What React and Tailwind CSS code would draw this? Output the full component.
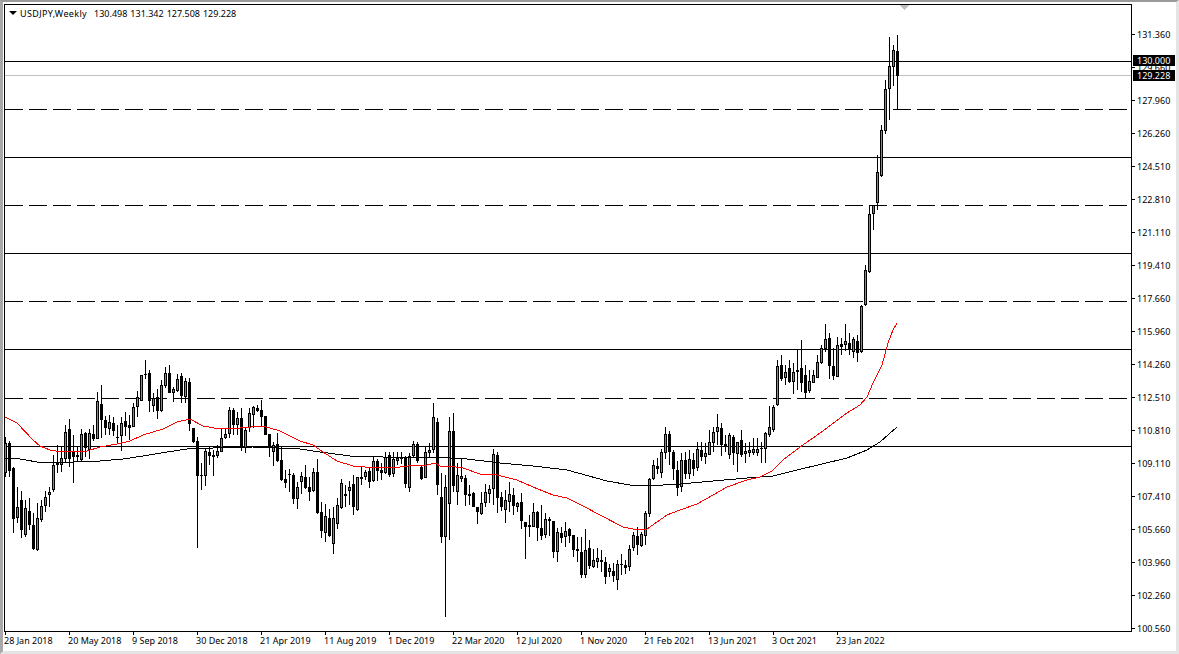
import React from "react";

// candles traced from the chart: [bull, high, top, bottom, low], y values are 3x from the offset
const raw = [
  [360, [
    [1,232,250,338,350],[0,243,250,332,350],[0,322,325,476,518],[1,380,442,474,488],[0,393,420,510,535],
    [1,420,445,525,530],[0,415,453,495,510],[0,460,495,566,570],[1,430,474,570,572],[1,420,438,480,485],
    [1,392,411,438,455],[1,380,396,404,440],[1,285,315,390,395],[0,255,310,314,338],[1,262,295,314,335],
    [1,195,217,298,305],[0,178,207,298,320],[0,225,276,292,368],[0,262,286,291,305],[1,208,223,300,302],
    [0,215,219,265,290],[1,208,220,270,296],[0,195,222,236,243],[1,97,124,236,238],[0,75,132,180,235],
    [0,168,180,203,225],[1,165,186,207,225],[0,170,188,213,228],[0,195,231,233,250],[1,170,189,227,272],
    [0,155,183,200,228],[0,165,195,204,240],[1,128,141,200,200],[1,92,112,142,170],[1,45,46,122,122],
    [0,0,42,46,57],[0,30,39,122,155],[1,100,115,137,157],[0,88,110,153,178],[1,60,76,152,155],
    [1,20,40,77,85],[0,16,40,98,100],[1,80,87,100,125],[1,42,58,92,95],[0,38,48,108,130],
    [1,55,63,110,130],[0,55,67,192,212],[0,205,205,247,250],[0,232,244,347,563],[0,310,346,349,390],
    [1,265,272,347,378],[0,262,276,288,315],[0,270,285,290,347],[1,255,273,288,295],[1,205,235,275,277],
    [1,205,222,234,236],[1,140,150,223,235],[0,145,150,195,225],[1,155,175,195,225],[0,145,174,265,272],
    [1,205,210,265,278],[1,145,160,203,215],[1,138,142,165,205],[0,135,145,152,155],[0,120,150,170,200],
    [0,168,168,225,225],[0,222,222,265,292],[1,245,256,275,318],[0,220,253,303,305],[0,262,300,360,362],
    [0,330,358,368,385],[0,328,342,346,395],[0,338,346,416,432],[1,365,382,416,446],
  ]],
  [390, [
    [1,247,258,275,312],[0,225,262,295,297],[0,262,291,305,332],[1,235,246,303,305],[0,207,246,370,372],
    [0,336,366,422,445],[1,342,379,428,456],[0,358,384,438,442],[1,352,385,461,491],[1,325,345,401,418],
    [1,267,280,353,356],[0,285,313,317,352],[1,272,292,302,345],[0,255,283,350,375],[1,260,262,361,362],
    [0,228,262,266,285],[1,240,246,262,270],[0,232,243,276,294],[1,202,213,272,276],[0,208,213,242,272],
    [0,218,240,248,270],[1,185,200,248,252],[0,185,195,255,260],[1,187,207,253,260],[1,187,203,212,225],
    [0,187,203,206,222],[0,197,200,282,295],[1,190,199,293,305],[1,152,163,198,200],[0,155,162,212,218],
    [0,225,230,267,270],[1,172,187,263,265],[1,160,181,189,200],[1,40,82,179,190],[0,85,97,285,315],
    [0,250,321,440,458],[1,255,292,440,680],[1,82,124,341,450],[0,70,124,288,305],[1,220,256,305,345],
    [1,205,259,266,275],[0,255,265,315,347],[0,285,313,317,345],[0,305,310,351,352],[0,350,352,365,402],
    [1,305,340,372,374],[1,282,307,338,352],[1,285,298,311,340],[1,178,192,298,345],[0,185,196,323,368],
    [0,305,321,351,362],[1,300,331,359,398],[1,275,313,335,365],[0,295,316,347,375],[1,335,340,350,365],
    [0,310,337,394,418],[0,395,396,410,506],[0,375,406,410,440],[1,340,367,410,412],[0,362,366,414,452],
    [0,345,414,438,450],[1,370,388,434,445],[0,380,388,392,437],[0,392,393,485,505],[1,415,427,485,515],
    [0,410,430,444,460],[1,395,424,442,470],[0,415,418,437,458],[0,435,436,480,502],[0,440,478,482,515],
    [0,440,487,555,563],[1,418,481,556,563],[0,450,474,527,537],[1,478,511,530,535],[1,473,505,515,535],
  ]],
  [400, [
    [0,450,481,485,515],[0,472,487,530,552],[1,492,505,515,532],[0,490,514,527,545],[1,480,493,540,570],
    [0,462,491,494,525],[0,480,496,503,522],[1,435,448,500,512],[1,395,406,443,452],[0,380,408,434,465],
    [1,395,403,437,440],[1,332,340,407,435],[1,235,238,342,350],[1,180,196,237,240],[0,175,198,206,222],
    [1,148,157,218,235],[1,82,103,158,178],[0,92,103,157,195],[0,150,156,208,240],[0,182,209,263,287],
    [1,160,180,261,275],[0,155,181,222,238],[1,150,177,222,238],[0,158,180,207,228],[1,125,148,203,212],
    [0,125,151,172,182],[1,130,160,170,192],[1,90,127,164,165],[1,80,97,128,156],[1,42,82,97,135],
    [0,70,85,135,168],[0,105,132,138,155],[1,100,105,165,178],[0,105,110,160,195],[1,125,127,161,215],
    [0,90,121,164,170],[1,130,154,162,190],[1,125,151,158,172],[1,115,148,158,165],[1,115,146,158,168],
    [0,127,143,146,190],[1,95,100,146,190],[1,18,82,104,110],
  ]],
  [290, [
    [1,345,351,420,425],[1,210,228,345,347],[0,195,225,268,272],[1,225,246,265,285],[0,210,234,275,280],
    [1,218,247,277,312],[0,180,240,245,300],[0,150,235,278,305],[0,225,255,308,325],[1,240,273,304,308],
    [1,240,256,278,280],[1,195,217,263,265],[1,165,175,220,222],[1,102,148,177,185],[0,128,145,228,268],
    [0,175,229,258,270],[1,140,166,260,262],[0,145,163,170,195],[1,102,154,166,182],[0,128,160,178,195],
    [1,140,148,185,205],[0,135,154,190,215],[1,45,48,187,190],
  ]],
  [30, [
    [1,705,720,825,828],[1,525,552,725,728],[1,525,525,552,600],[1,375,425,519,540],[1,285,300,438,440],
    [1,150,178,302,312],[1,22,108,178,270],[1,45,60,110,168],[0,15,63,137,238],
  ]],
];

const candles = raw.flatMap(([base, rows]) =>
  rows.map(([up, h, t, b, l]) => ({
    up,
    high: Math.round(base + h / 3),
    top: Math.round(base + t / 3),
    bottom: Math.round(base + b / 3),
    low: Math.round(base + l / 3),
  }))
);

const red =
  "5,417 17,423 33,440 40,446 50,450 62,452 73,451 87,451 100,447 117,444 130,441 143,435 163,429 177,422 190,419 203,426 220,429 240,428 263,426 280,431 300,441 313,445 323,452 337,461 353,466 377,468 400,467 417,465 423,466 435,463 442,467 448,466 463,468 480,474 497,475 517,480 533,487 553,495 567,498 583,506 600,515 623,527 633,529 647,529 667,515 680,510 697,504 713,495 727,487 747,480 760,477 772,471 783,460 800,447 813,438 827,428 847,413 860,405 867,397 873,383 882,365 888,343 893,330 897,323";
const black =
  "5,458 20,459 43,463 73,462 100,461 123,459 143,456 167,452 187,449 213,448 253,447 300,449 320,452 350,456 383,457 433,457 467,459 500,463 533,466 567,470 607,481 630,485 647,486 680,484 713,481 747,478 773,476 797,470 847,458 867,450 880,442 897,427";

const levels = [
  [61, false],
  [109, true],
  [157, false],
  [205, true],
  [253, false],
  [301, true],
  [349, false],
  [398, true],
  [446, false],
];

const prices = [
  "131.360", "129.660", "127.960", "126.260", "124.510", "122.810", "121.110", "119.410", "117.660", "115.960",
  "114.260", "112.510", "110.810", "109.110", "107.410", "105.660", "103.960", "102.260", "100.560",
];

const dates = [
  "28 Jan 2018", "20 May 2018", "9 Sep 2018", "30 Dec 2018", "21 Apr 2019", "11 Aug 2019", "1 Dec 2019",
  "22 Mar 2020", "12 Jul 2020", "1 Nov 2020", "21 Feb 2021", "13 Jun 2021", "3 Oct 2021", "23 Jan 2022",
];

function Candle({ c, i }) {
  const x = 5 + 4 * i;
  return (
    <g>
      <rect x={x} y={c.high} width="1" height={Math.max(c.low - c.high, 1)} fill="#000" />
      <rect x={x - 1} y={c.top} width="3" height={Math.max(c.bottom - c.top, 1)} fill="#000" />
      {c.up === 1 && c.bottom - c.top > 2 && (
        <rect x={x} y={c.top + 1} width="1" height={c.bottom - c.top - 2} fill="#00e800" />
      )}
    </g>
  );
}

function Chart() {
  return (
    <svg width="1126" height="626" viewBox="5 5 1126 626" shapeRendering="crispEdges" className="block">
      {levels.map(([y, dashed]) => (
        <line key={y} x1="5" x2="1131" y1={y + 0.5} y2={y + 0.5} stroke="#000" strokeDasharray={dashed ? "18 6" : undefined} />
      ))}
      <line x1="5" x2="1131" y1="75.5" y2="75.5" stroke="#c0c0c0" />
      <polygon points="900,5 909,5 904.5,10" fill="#c0c0c0" />
      {candles.map((c, i) => (
        <Candle key={i} c={c} i={i} />
      ))}
      <polyline points={black} fill="none" stroke="#000" />
      <polyline points={red} fill="none" stroke="#ff0000" />
    </svg>
  );
}

export default function App() {
  return (
    <div className="w-[1179px] h-[654px] bg-white overflow-hidden border-t-2 border-t-[#9a9a9a] border-l-[3px] border-l-[#a8a8a8] border-r-[3px] border-r-[#e4e4e4] border-b-[3px] border-b-[#e4e4e4] text-[9px] text-black font-['Noto_Sans',sans-serif]">
      <div className="flex pt-[2px] pl-px">
        <div className="w-[1128px] shrink-0">
          <div className="relative border border-black">
            <Chart />
            <div className="absolute left-[3px] top-[2px] flex items-center h-[12px] leading-none whitespace-nowrap">
              <span className="w-0 h-0 mr-[3px] ml-[1px] border-x-[4px] border-x-transparent border-t-[4px] border-t-black" />
              <span className="tracking-[0.35px]">USDJPY,Weekly</span>
              <span className="ml-[7px] flex gap-[3px]">
                <span>130.498</span>
                <span>131.342</span>
                <span>127.508</span>
                <span>129.228</span>
              </span>
            </div>
          </div>
          <div className="flex">
            {dates.map((d) => (
              <div key={d} className="w-[64px] shrink-0 whitespace-nowrap">
                <div className="ml-px w-px h-[3px] bg-black" />
                <div className="leading-[12px]">{d}</div>
              </div>
            ))}
          </div>
        </div>
        <div className="relative flex-1 pt-[14px]">
          {prices.map((p) => (
            <div key={p} className="flex items-center h-[33px]">
              <span className="w-[3px] h-px bg-black" />
              <span className="ml-[2px] leading-none">{p}</span>
            </div>
          ))}
          <div className="absolute left-px top-[51px] w-[42px] h-[11px] bg-black text-white pl-[4px] leading-[11px]">130.000</div>
          <div className="absolute left-px top-[66px] w-[42px] h-[11px] bg-black text-white pl-[4px] leading-[11px]">129.228</div>
        </div>
      </div>
    </div>
  );
}
